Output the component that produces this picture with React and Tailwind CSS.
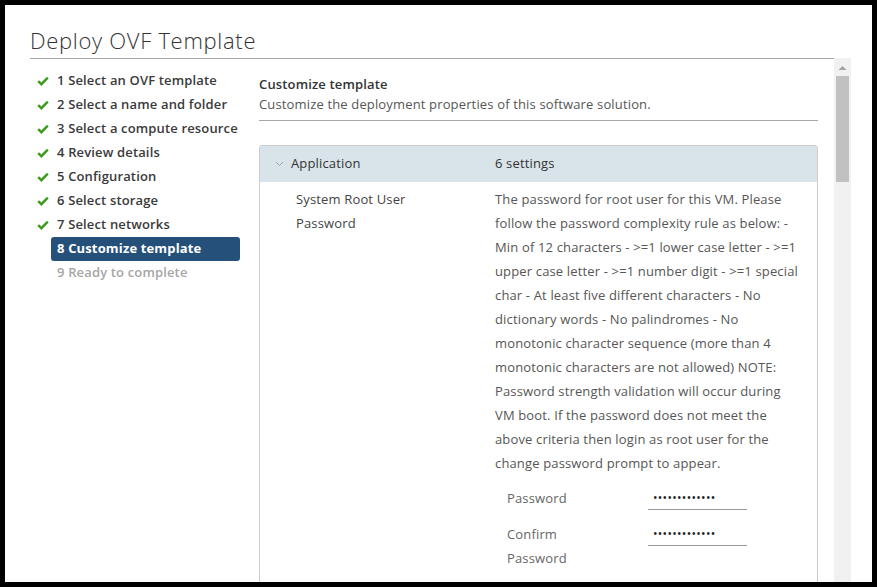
import React from 'react'

const steps = [
  { n: 1, label: 'Select an OVF template', done: true },
  { n: 2, label: 'Select a name and folder', done: true },
  { n: 3, label: 'Select a compute resource', done: true },
  { n: 4, label: 'Review details', done: true },
  { n: 5, label: 'Configuration', done: true },
  { n: 6, label: 'Select storage', done: true },
  { n: 7, label: 'Select networks', done: true },
  { n: 8, label: 'Customize template', active: true },
  { n: 9, label: 'Ready to complete' },
]

const description =
  'The password for root user for this VM. Please follow the password complexity rule as below: - Min of 12 characters - >=1 lower case letter - >=1 upper case letter - >=1 number digit - >=1 special char - At least five different characters - No dictionary words - No palindromes - No monotonic character sequence (more than 4 monotonic characters are not allowed) NOTE: Password strength validation will occur during VM boot. If the password does not meet the above criteria then login as root user for the change password prompt to appear.'

const Check = () => (
  <svg width="12" height="10" viewBox="0 0 12 10" className="shrink-0">
    <path d="M1.2 5.2 L4.4 8.2 L10.8 1.6" fill="none" stroke="#3b9b1a" strokeWidth="2.4" strokeLinejoin="miter" />
  </svg>
)

const Dots = () => (
  <div className="w-[99px] h-[24px] border-b border-[#999] flex items-center pl-[5px] text-[12px] tracking-[0.3px] text-[#222]">
    {'•••••••••••••'}
  </div>
)

export default function App() {
  return (
    <div className="w-[877px] h-[587px] bg-black p-[5px]" style={{ fontFamily: '"Open Sans", "Noto Sans", sans-serif' }}>
      <div className="w-[867px] h-[577px] bg-white flex flex-col overflow-hidden">
        <div className="ml-[25px] mr-[22px] pt-[21px] pb-[4px] border-b border-[#a8a8a8]">
          <h1 className="text-[22px] leading-[28px] font-light text-[#333] tracking-[0.7px]">Deploy OVF Template</h1>
        </div>

        <div className="flex flex-1 min-h-0 pl-[25px]">
          <nav className="w-[220px] shrink-0 pt-[10px] pr-[10px] tracking-[0.15px]">
            {steps.map((s) => (
              <div key={s.n} className="flex items-center h-[24px]">
                <div className="w-[21px] shrink-0 pl-[7px] flex items-center">{s.done && <Check />}</div>
                <div
                  className={`flex-1 min-w-0 h-[24px] px-[6px] flex items-center whitespace-nowrap text-[13px] rounded-[3px] ${
                    s.active ? 'bg-[#25507a] text-white font-bold' : s.done ? 'text-[#3a3a3a] font-semibold' : 'text-[#a6a6a6] font-semibold'
                  }`}
                >
                  {s.n} {s.label}
                </div>
              </div>
            ))}
          </nav>

          <div className="flex-1 min-w-0 overflow-hidden pl-[9px] pr-[16px] text-[13px] tracking-[0.15px]">
            <div className="pt-[15px] pb-[6px] border-b border-[#a8a8a8]">
              <div className="leading-[20px] font-semibold text-[#333]">Customize template</div>
              <div className="leading-[20px] text-[#565656]">Customize the deployment properties of this software solution.</div>
            </div>

            <div className="mt-[24px] border border-[#ccc] rounded-t-[3px] h-[600px]">
              <div className="flex items-center h-[36px] bg-[#d9e4ea] text-[#333]">
                <div className="w-[31px] flex justify-end pr-[7px]">
                  <svg width="9" height="6" viewBox="0 0 9 6">
                    <path d="M1 1 L4.5 4.5 L8 1" fill="none" stroke="#9aa4ab" strokeWidth="1" />
                  </svg>
                </div>
                <div className="w-[204px]">Application</div>
                <div>6 settings</div>
              </div>

              <div className="flex pt-[5px] text-[#565656]">
                <div className="w-[235px] pl-[36px] pr-[70px] leading-[24px] text-[#444]">System Root User Password</div>
                <div className="w-[304px]">
                  <p className="leading-[24px]">{description}</p>
                  <div className="mt-[11px] ml-[12px] flex flex-col gap-[12px]">
                    <div className="flex">
                      <div className="w-[141px] leading-[24px] text-[#666]">Password</div>
                      <Dots />
                    </div>
                    <div className="flex">
                      <div className="w-[141px] leading-[24px] text-[#666]">Confirm<br />Password</div>
                      <Dots />
                    </div>
                  </div>
                </div>
              </div>
            </div>
          </div>

          <div className="w-[17px] shrink-0 bg-[#f1f1f1] flex flex-col items-center mr-[21px] -mt-px">
            <svg width="9" height="6" viewBox="0 0 9 6" className="mt-[7px]">
              <path d="M0.5 5 L4.5 1 L8.5 5 Z" fill="#a3a3a3" />
            </svg>
            <div className="mt-[5px] w-[13px] h-[106px] bg-[#c1c1c1]" />
          </div>
        </div>
      </div>
    </div>
  )
}
